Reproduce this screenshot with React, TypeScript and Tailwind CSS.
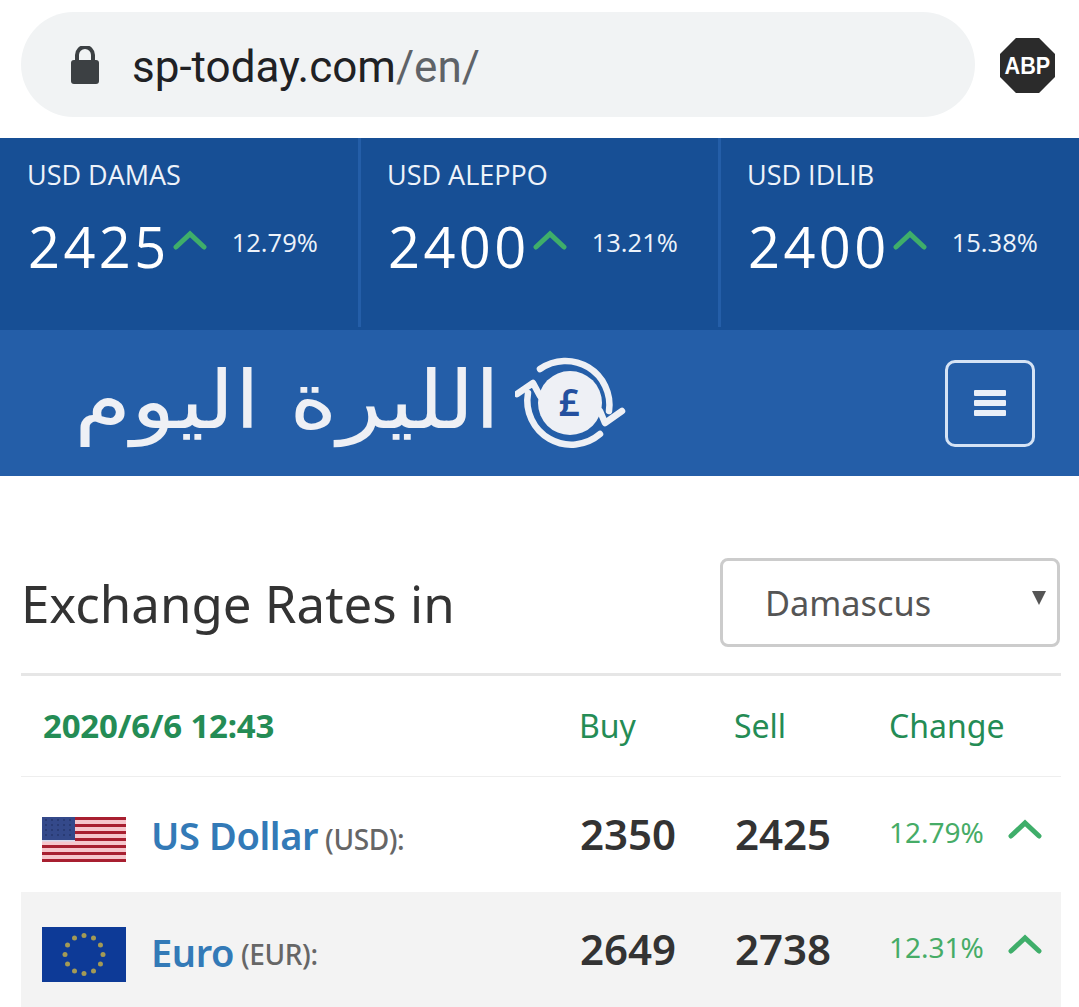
const tickers = [
  { label: "USD DAMAS", value: "2425", pct: "12.79%" },
  { label: "USD ALEPPO", value: "2400", pct: "13.21%" },
  { label: "USD IDLIB", value: "2400", pct: "15.38%" },
];

const Chevron = ({ className }: { className: string }) => (
  <svg viewBox="0 0 34 20" className={className} fill="none" stroke="currentColor" strokeWidth="5" strokeLinecap="round" strokeLinejoin="miter">
    <path d="M3 17L17 4L31 17" />
  </svg>
);

const UsFlag = () => (
  <svg viewBox="0 0 84 45" className="w-[84px] h-[45px] shrink-0">
    <rect width="84" height="45" fill="#f6c6cc" />
    {[0, 7, 14, 21, 28, 35, 42].map((y) => (
      <rect key={y} y={y} width="84" height="3" fill="#a81f30" />
    ))}
    <rect width="33" height="23" fill="#34498a" />
    {[3, 8, 13, 18].map((y) =>
      [4, 10, 16, 22, 28].map((x) => <circle key={`${x}-${y}`} cx={x} cy={y} r="1" fill="#26376c" />)
    )}
    <rect y="23" width="33" height="1.5" fill="#d8dcec" />
  </svg>
);

const EuFlag = () => {
  const stars = Array.from({ length: 12 }, (_, i) => {
    const a = (i * Math.PI) / 6;
    return { x: 42 + 19 * Math.sin(a), y: 27.5 - 19 * Math.cos(a) };
  });
  return (
    <svg viewBox="0 0 84 55" className="w-[84px] h-[55px] shrink-0">
      <rect width="84" height="55" fill="#0d3a97" />
      {stars.map((s, i) => (
        <circle key={i} cx={s.x} cy={s.y} r="2.5" fill="#a39a55" />
      ))}
    </svg>
  );
};

const LogoMark = () => (
  <svg viewBox="0 0 112 100" className="w-[112px] h-[100px] shrink-0">
    <circle cx="55" cy="50" r="32" fill="#eef0f5" />
    <g fill="none" stroke="#eef0f5" strokeWidth="6.5" strokeLinecap="round" strokeLinejoin="round">
      <path d="M25 16A44 44 0 0 1 94 58" />
      <path d="M85 81A44 44 0 0 1 13 40" />
      <path d="M2 41L18 30L25 43" />
      <path d="M107 58L90 70L85 58" />
    </g>
    <text x="54" y="63" textAnchor="middle" fontSize="37" fontWeight="600" fill="#24509f" fontFamily="'Noto Sans', sans-serif">£</text>
  </svg>
);

const rows = [
  { flag: <UsFlag />, name: "US Dollar", code: "(USD):", buy: "2350", sell: "2425", pct: "12.79%", nudge: "mt-[2px]" },
  { flag: <EuFlag />, name: "Euro", code: "(EUR):", buy: "2649", sell: "2738", pct: "12.31%", nudge: "mt-[6px]", shaded: true },
];

export default function App() {
  return (
    <div className="w-[1079px] h-[1007px] overflow-hidden bg-white font-['Noto_Sans',sans-serif]">
      <div className="h-[138px] flex items-start pt-3 pl-[21px]">
        <div className="w-[954px] h-[105px] rounded-full bg-[#f1f3f4] flex items-center pl-[49px]">
          <svg viewBox="0 0 30 38" className="w-[30px] h-[38px]">
            <path d="M7 15V9a8 8 0 0 1 16 0v6" fill="none" stroke="#3c4043" strokeWidth="4" />
            <rect x="1" y="14" width="28" height="24" rx="3" fill="#3c4043" />
          </svg>
          <div className="ml-[32px] mt-[4px] text-[44px] leading-none font-['Roboto',sans-serif] text-[#202124]">
            sp-today.com<span className="text-[#5f6368]">/en/</span>
          </div>
        </div>
        <div className="ml-[25px] mt-[26px] w-[55px] h-[55px] bg-[#2b2b2b] [clip-path:polygon(29%_0,71%_0,100%_29%,100%_71%,71%_100%,29%_100%,0_71%,0_29%)] flex items-center justify-center text-white font-['Liberation_Sans',sans-serif]">
          <span className="text-[24px] font-bold leading-none scale-x-[0.9]">ABP</span>
        </div>
      </div>

      <div className="h-[192px] bg-[#174f95] grid grid-cols-[361px_360px_1fr]">
        {tickers.map((t, i) => (
          <div key={t.label} className={`${i === 0 ? "pl-[27px]" : "pl-[26px]"} pt-[20px] ${i < 2 ? "border-r-[3px] border-[#245ea8] mb-[3px]" : ""}`}>
            <div className="text-[27px] leading-[33px] text-[#eef3fa] font-['Open_Sans',sans-serif]">{t.label}</div>
            <div className="flex items-center mt-[24px] h-[62px]">
              <span className="ml-[1px] text-[56px] leading-none tracking-[3.4px] text-white font-['Open_Sans',sans-serif]">{t.value}</span>
              <Chevron className="w-[34px] h-[20px] ml-[3px] mb-[13px] text-[#3fae6a]" />
              <span className="ml-[25px] mb-[7px] text-[25.5px] leading-none text-[#eef3fa] font-['Open_Sans',sans-serif]">{t.pct}</span>
            </div>
          </div>
        ))}
      </div>

      <div className="h-[146px] bg-[#245ea8] flex items-center pl-[80px] pr-[44px]">
        <div dir="rtl" className="mb-[4px] text-[80px] leading-none text-[#eef0f5] font-['DejaVu_Sans',sans-serif] w-[420px] whitespace-nowrap scale-x-[1.15] origin-right">
          الليرة اليوم
        </div>
        <div className="ml-[15px]">
          <LogoMark />
        </div>
        <div className="ml-auto w-[90px] h-[87px] rounded-[10px] border-[3px] border-[#d5e3f5] flex flex-col items-center justify-center gap-[4px]">
          <div className="w-[32px] h-[6px] rounded-[1px] bg-[#e9eff8]" />
          <div className="w-[32px] h-[6px] rounded-[1px] bg-[#e9eff8]" />
          <div className="w-[32px] h-[6px] rounded-[1px] bg-[#e9eff8]" />
        </div>
      </div>

      <div className="pl-[21px] pr-[18px]">
        <div className="h-[200px] flex items-end justify-between border-b-[3px] border-[#e6e6e6] pb-[26px]">
          <h1 className="text-[51px] leading-[88px] text-[#333]">Exchange Rates in</h1>
          <div className="relative w-[340px] h-[89px] mr-[1px] rounded-[8px] border-[3px] border-[#cccccc] flex items-center pl-[42px] text-[34.3px] text-[#555]">
            Damascus
            <span className="absolute right-[11px] top-[30px] w-0 h-0 border-x-[7px] border-x-transparent border-t-[14px] border-t-[#555]" />
          </div>
        </div>

        <div className="h-[101px] grid grid-cols-[558px_155px_155px_1fr] items-center border-b border-[#eeeeee] text-[#248c55] text-[32px]">
          <div className="pl-[22px] font-bold text-[33px] tracking-[-0.2px]">2020/6/6 12:43</div>
          <div>Buy</div>
          <div>Sell</div>
          <div>Change</div>
        </div>

        {rows.map((r) => (
          <div key={r.name} className={`h-[115px] grid grid-cols-[558px_155px_155px_1fr] items-center ${r.shaded ? "bg-[#f3f3f3]" : ""}`}>
            <div className="flex items-center pl-[21px]">
              <div className="mt-[10px]">{r.flag}</div>
              <span className={`ml-[25px] text-[38px] font-semibold tracking-[-0.4px] text-[#337ab7] ${r.nudge}`}>{r.name}</span>
              <span className="ml-[7px] mt-[8px] text-[28px] font-medium tracking-[-0.4px] text-[#666]">{r.code}</span>
            </div>
            <div className="pl-[1px] mb-[2px] text-[42px] font-semibold text-[#333]">{r.buy}</div>
            <div className="pl-[1px] mb-[2px] text-[42px] font-semibold text-[#333]">{r.sell}</div>
            <div className="flex items-center">
              <span className="mb-[6px] text-[28px] text-[#46ac67]">{r.pct}</span>
              <Chevron className="w-[34px] h-[20px] ml-[24px] mb-[12px] text-[#3fae6a]" />
            </div>
          </div>
        ))}
      </div>
    </div>
  );
}
